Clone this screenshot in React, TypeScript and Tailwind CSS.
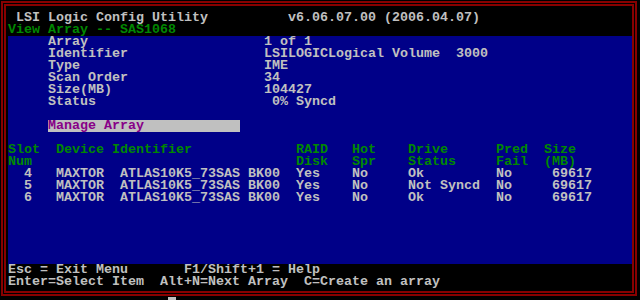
const GRAY = "text-[#c0c0c0]";

const info: [string, string][] = [
  ["Array", "1 of 1"],
  ["Identifier", "LSILOGICLogical Volume  3000"],
  ["Type", "IME"],
  ["Scan Order", "34"],
  ["Size(MB)", "104427"],
  ["Status", " 0% Syncd"],
];

const drives = [
  { slot: "  4", status: "Ok" },
  { slot: "  5", status: "Not Syncd" },
  { slot: "  6", status: "Ok" },
];

const cols = "grid grid-cols-[48px_56px_184px_56px_56px_88px_48px_1fr]";

function Row({ children, className = "" }: { children?: React.ReactNode; className?: string }) {
  return <div className={`h-[12px] whitespace-pre ${className}`}>{children}</div>;
}

export default function App() {
  return (
    <div className="flex flex-col w-[640px] h-[300px] overflow-hidden bg-black pt-px pl-px pr-[3px] font-['Liberation_Mono',monospace] text-[13.333px] leading-[12px] font-bold">
      <div className="border-2 border-[#880000] p-px">
        <div className={`flex flex-col h-[289px] border-2 border-[#880000] pl-[2px] pt-[6px] ${GRAY}`}>
          <Row> LSI Logic Config Utility          v6.06.07.00 (2006.04.07)</Row>
          <Row className="text-[#008800]">View Array -- SAS1068</Row>

          <div className="flex flex-col h-[228px] bg-[#000088]">
            {info.map(([label, value]) => (
              <div key={label} className="flex h-[12px] whitespace-pre pl-[40px]">
                <span className="w-[216px]">{label}</span>
                <span>{value}</span>
              </div>
            ))}
            <Row />
            <div className="h-[12px] ml-[40px] w-[192px] bg-[#c0c0c0] text-[#880088]">Manage Array</div>
            <Row />

            <div className={`${cols} text-[#008800] whitespace-pre`}>
              <span>Slot{"\n"}Num</span>
              <span>Device</span>
              <span>Identifier</span>
              <span>RAID{"\n"}Disk</span>
              <span>Hot{"\n"}Spr</span>
              <span>Drive{"\n"}Status</span>
              <span>Pred{"\n"}Fail</span>
              <span>Size{"\n"}(MB)</span>
            </div>
            {drives.map((d) => (
              <div key={d.slot} className={`${cols} h-[12px] whitespace-pre`}>
                <span>{d.slot}</span>
                <span>MAXTOR</span>
                <span> ATLAS10K5_73SAS BK00</span>
                <span>Yes</span>
                <span>No</span>
                <span>{d.status}</span>
                <span>No</span>
                <span> 69617</span>
              </div>
            ))}
          </div>

          <Row>Esc = Exit Menu       F1/Shift+1 = Help</Row>
          <Row>Enter=Select Item  Alt+N=Next Array  C=Create an array</Row>
        </div>
      </div>
      <div className="h-[4px]">
        <div className="ml-[167px] mt-px w-2 h-[3px] bg-[#c0c0c0]" />
      </div>
    </div>
  );
}
